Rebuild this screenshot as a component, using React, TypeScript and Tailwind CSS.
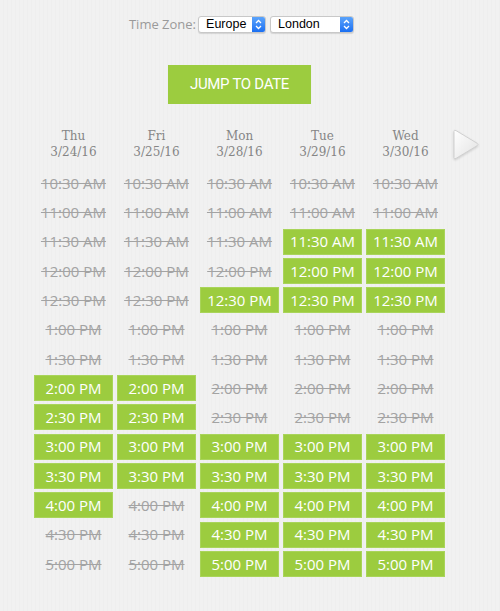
const times = [
  "10:30 AM",
  "11:00 AM",
  "11:30 AM",
  "12:00 PM",
  "12:30 PM",
  "1:00 PM",
  "1:30 PM",
  "2:00 PM",
  "2:30 PM",
  "3:00 PM",
  "3:30 PM",
  "4:00 PM",
  "4:30 PM",
  "5:00 PM",
];

const days = [
  { day: "Thu", date: "3/24/16", open: ["2:00 PM", "2:30 PM", "3:00 PM", "3:30 PM", "4:00 PM"] },
  { day: "Fri", date: "3/25/16", open: ["2:00 PM", "2:30 PM", "3:00 PM", "3:30 PM"] },
  { day: "Mon", date: "3/28/16", open: ["12:30 PM", "3:00 PM", "3:30 PM", "4:00 PM", "4:30 PM", "5:00 PM"] },
  {
    day: "Tue",
    date: "3/29/16",
    open: ["11:30 AM", "12:00 PM", "12:30 PM", "3:00 PM", "3:30 PM", "4:00 PM", "4:30 PM", "5:00 PM"],
  },
  {
    day: "Wed",
    date: "3/30/16",
    open: ["11:30 AM", "12:00 PM", "12:30 PM", "3:00 PM", "3:30 PM", "4:00 PM", "4:30 PM", "5:00 PM"],
  },
];

function Select({ value, width }: { value: string; width: string }) {
  return (
    <div
      className={`${width} h-[17px] flex items-stretch rounded-[3px] border border-[#c8c8c8] bg-white shadow-[0_1px_1px_rgba(0,0,0,0.12)] overflow-hidden`}
    >
      <span className="flex-1 pl-[7px] text-[12.5px] leading-[15px] text-black font-['Liberation_Sans',sans-serif]">
        {value}
      </span>
      <span className="w-[13px] flex items-center justify-center bg-gradient-to-b from-[#5aa3fb] to-[#1a6ff2]">
        <svg width="7" height="11" viewBox="0 0 7 11" fill="none" stroke="white" strokeWidth="1.3">
          <path d="M1 4 L3.5 1.5 L6 4" />
          <path d="M1 7 L3.5 9.5 L6 7" />
        </svg>
      </span>
    </div>
  );
}

export default function App() {
  return (
    <div className="w-[500px] h-[611px] overflow-hidden bg-[#f0f0f0] bg-[repeating-linear-gradient(90deg,#f1f1f1_0px,#f1f1f1_3px,#eeeeee_3px,#eeeeee_4px)] font-['Open_Sans',sans-serif]">
      <div className="pl-[34px] pt-[16px] w-[445px] flex flex-col items-center">
        {/* Time zone */}
        <div className="flex items-center gap-[4px] h-[17px] ml-[4px]">
          <span className="text-[13px] text-[#9a9a9a] mr-[-2px]">Time Zone:</span>
          <Select value="Europe" width="w-[68px]" />
          <Select value="London" width="w-[84px]" />
        </div>

        {/* Jump */}
        <button className="mt-[32px] w-[143px] h-[39px] bg-[#9ccc3f] text-white text-[15px] tracking-[-0.3px] font-['Roboto',sans-serif]">
          JUMP TO DATE
        </button>
      </div>

      <div className="flex">
        <div className="pl-[34px] pt-[24px] w-[445px]">
          {/* Headers */}
          <div className="grid grid-cols-5 gap-x-[4px] font-['DejaVu_Serif',serif] text-[#858585] text-[12px] leading-[16px] text-center">
            {days.map((d) => (
              <div key={d.day}>
                <div>{d.day}</div>
                <div>{d.date}</div>
              </div>
            ))}
          </div>

          {/* Slots */}
          <div className="mt-[10px] grid grid-cols-5 grid-flow-col grid-rows-[repeat(14,26px)] gap-x-[4px] gap-y-[3.3px]">
            {days.map((d) =>
              times.map((t) =>
                d.open.includes(t) ? (
                  <div
                    key={d.day + t}
                    className="flex items-center justify-center bg-[#9ccc3f] border border-[#a9d45a] text-white text-[15px]"
                  >
                    {t}
                  </div>
                ) : (
                  <div
                    key={d.day + t}
                    className="flex items-center justify-center text-[#a3a3a3] text-[15px] line-through"
                  >
                    {t}
                  </div>
                )
              )
            )}
          </div>
        </div>

        {/* Next arrow */}
        <div className="pt-[24px] pl-[6px]">
          <svg width="30" height="34" viewBox="0 0 30 34">
            <defs>
              <linearGradient id="arr" x1="0" y1="0" x2="1" y2="1">
                <stop offset="0" stopColor="#ffffff" />
                <stop offset="1" stopColor="#e2e2e2" />
              </linearGradient>
            </defs>
            <path
              d="M3 3.5 Q3 1.5 5 2.6 L26 15.2 Q28 16.5 26 17.8 L5 30.4 Q3 31.5 3 29.5 Z"
              fill="url(#arr)"
              stroke="#d0d0d0"
              strokeWidth="1"
              style={{ filter: "drop-shadow(0 1px 1px rgba(0,0,0,0.15))" }}
            />
          </svg>
        </div>
      </div>
    </div>
  );
}
